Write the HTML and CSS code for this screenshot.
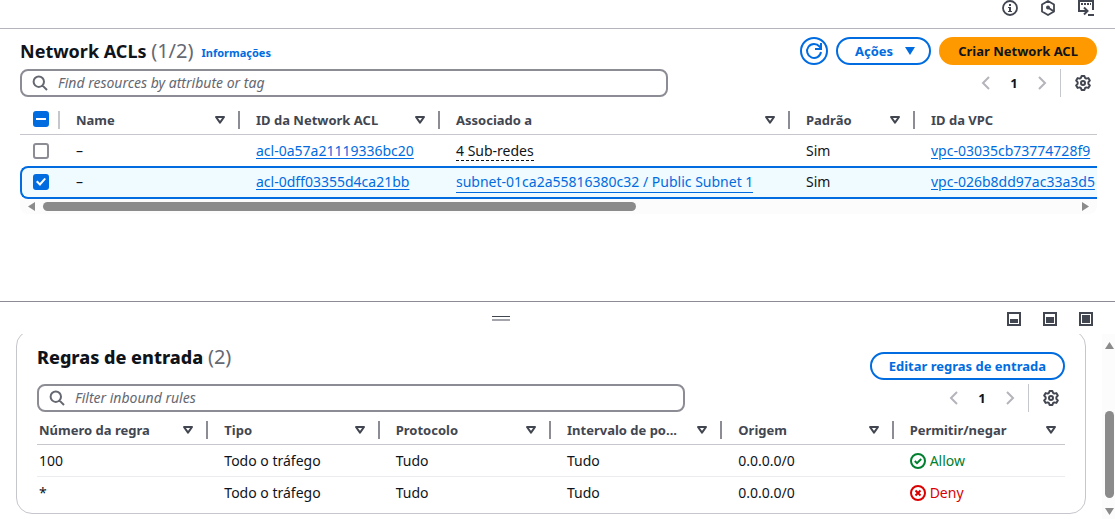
FILE: index.html
```html
<!DOCTYPE html>
<html lang="pt-BR">
<head>
<meta charset="utf-8">
<title>Network ACLs</title>
<link rel="stylesheet" href="styles.css">
</head>
<body>
<svg width="0" height="0" class="sprite" aria-hidden="true">
  <symbol id="search" viewBox="0 0 16 16"><path d="M6.8 1.500a5.200 5.200 0 1 0 0 10.400a5.200 5.200 0 0 0 0-10.400zM10.600 10.600L15 15" fill="none" stroke="currentColor" stroke-width="2"/></symbol>
  <symbol id="sort" viewBox="0 0 12 10"><path d="M2 2h8L6 7.600z" fill="none" stroke="currentColor" stroke-width="2" stroke-linejoin="round"/></symbol>
  <symbol id="left" viewBox="0 0 16 16"><path d="M11 2L5 8l6 6" fill="none" stroke="currentColor" stroke-width="2"/></symbol>
  <symbol id="right" viewBox="0 0 16 16"><path d="M5 2l6 6l-6 6" fill="none" stroke="currentColor" stroke-width="2"/></symbol>
  <symbol id="gear" viewBox="0 0 16 16"><path d="M6.600 1h2.800l.6 1.800l1.300.8l2-.5l1.500 2.500l-1.400 1.500v1.800l1.400 1.500l-1.500 2.500l-2-.5l-1.300.8l-.6 1.800H6.600L6 13.200l-1.300-.8l-2 .5l-1.500-2.500l1.400-1.500V7.100L1.200 5.600l1.500-2.500l2 .5L6 2.800z" fill="none" stroke="currentColor" stroke-width="2" stroke-linejoin="round"/><circle cx="8" cy="8" r="2" fill="none" stroke="currentColor" stroke-width="2"/></symbol>
</svg>

<div class="app">
  <header class="topbar">
    <button class="icon-btn" aria-label="Info"><svg width="16" height="16" viewBox="0 0 16 16"><circle cx="8" cy="8" r="7" fill="none" stroke="currentColor" stroke-width="1.800"/><path d="M7 4h2v2H7zM6 7h3v4h1v1H6v-1h1V8H6z" fill="currentColor"/></svg></button>
    <button class="icon-btn" aria-label="Amazon Q"><svg width="16" height="16" viewBox="0 0 16 16"><path d="M8 1l6 3.500v7L8 15l-6-3.500v-7z" fill="none" stroke="currentColor" stroke-width="1.800" stroke-linejoin="round"/><circle cx="8" cy="7.500" r="2" fill="currentColor"/><path d="M8 7.500l6 4" stroke="currentColor" stroke-width="2"/></svg></button>
    <button class="icon-btn" aria-label="CloudShell"><svg width="16" height="16" viewBox="0 0 16 16"><path d="M4 11H1V1h14v9" fill="none" stroke="currentColor" stroke-width="2"/><path d="M3 4h2M6 4h2M9 4h2M12 4h1" stroke="currentColor" stroke-width="2"/><path d="M4 11h5M6 7.500l3.500 3.500L6 14.500M10 15h6" fill="none" stroke="currentColor" stroke-width="2"/></svg></button>
  </header>

  <main class="main">
    <div class="head">
      <h1 class="title">Network ACLs <span class="count">(1/2)</span></h1>
      <a class="info" href="#">Informações</a>
      <div class="actions">
        <button class="btn round" aria-label="Atualizar"><svg width="18" height="18" viewBox="0 0 18 18"><path d="M16 10A7 7 0 1 1 14.500 4.500L16 6.500M16 1v6h-6" fill="none" stroke="currentColor" stroke-width="2"/></svg></button>
        <button class="btn menu">Ações <svg width="10" height="8" viewBox="0 0 10 8"><path d="M0 0h10L5 8z" fill="currentColor"/></svg></button>
        <button class="btn primary">Criar Network ACL</button>
      </div>
    </div>
    <div class="tools">
      <label class="search"><svg width="16" height="16"><use href="#search"/></svg><input type="search" placeholder="Find resources by attribute or tag" aria-label="Find resources by attribute or tag"></label>
      <div class="pager">
        <button class="icon-btn dim" aria-label="Página anterior"><svg width="16" height="16"><use href="#left"/></svg></button>
        <button class="page">1</button>
        <button class="icon-btn dim" aria-label="Próxima página"><svg width="16" height="16"><use href="#right"/></svg></button>
        <button class="icon-btn prefs" aria-label="Preferências"><svg width="16" height="16"><use href="#gear"/></svg></button>
      </div>
    </div>
    <div class="table-wrap">
      <table class="grid acls">
        <colgroup><col class="c-check"><col class="c-name"><col class="c-id"><col class="c-assoc"><col class="c-def"><col class="c-vpc"></colgroup>
        <thead><tr>
          <th class="check"><input class="box some" type="checkbox" checked aria-label="Selecionar tudo"></th>
          <th><div class="th"><span>Name</span><svg width="12" height="10"><use href="#sort"/></svg></div></th>
          <th><div class="th"><span>ID da Network ACL</span><svg width="12" height="10"><use href="#sort"/></svg></div></th>
          <th><div class="th"><span>Associado a</span><svg width="12" height="10"><use href="#sort"/></svg></div></th>
          <th><div class="th"><span>Padrão</span><svg width="12" height="10"><use href="#sort"/></svg></div></th>
          <th><div class="th"><span>ID da VPC</span></div></th>
        </tr></thead>
        <tbody>
          <tr><td class="check"><input class="box" type="checkbox" aria-label="acl-0a57a21119336bc20"></td><td>–</td><td><a href="#">acl-0a57a21119336bc20</a></td><td><button class="pop">4 Sub-redes</button></td><td>Sim</td><td><a href="#">vpc-03035cb73774728f9</a></td></tr>
          <tr class="selected"><td class="check"><input class="box tick" type="checkbox" checked aria-label="acl-0dff03355d4ca21bb"></td><td>–</td><td><a href="#">acl-0dff03355d4ca21bb</a></td><td><a class="under" href="#">subnet-01ca2a55816380c32 / Public Subnet 1</a></td><td>Sim</td><td><a href="#">vpc-026b8dd97ac33a3d5</a></td></tr>
        </tbody>
      </table>
    </div>
    <div class="hscroll"><i class="arrow al"></i><div class="track"><div class="thumb"></div></div><i class="arrow ar"></i></div>
  </main>

  <section class="panel">
    <div class="panel-bar">
      <button class="handle" aria-label="Redimensionar"></button>
      <div class="sizes">
        <button class="icon-btn" aria-label="Pequeno"><svg width="14" height="14" viewBox="0 0 14 14"><path d="M1 1h12v12H1z" fill="none" stroke="currentColor" stroke-width="2"/><path d="M3 7h8v4H3z" fill="currentColor"/></svg></button>
        <button class="icon-btn" aria-label="Médio"><svg width="14" height="14" viewBox="0 0 14 14"><path d="M1 1h12v12H1z" fill="none" stroke="currentColor" stroke-width="2"/><path d="M3 5h8v6H3z" fill="currentColor"/></svg></button>
        <button class="icon-btn" aria-label="Grande"><svg width="14" height="14" viewBox="0 0 14 14"><path d="M1 1h12v12H1z" fill="none" stroke="currentColor" stroke-width="2"/><path d="M3 3h8v8H3z" fill="currentColor"/></svg></button>
      </div>
    </div>
    <div class="panel-body">
      <div class="card">
        <div class="head">
          <h2 class="title">Regras de entrada <span class="count">(2)</span></h2>
          <div class="actions"><button class="btn edit">Editar regras de entrada</button></div>
        </div>
        <div class="tools">
          <label class="search"><svg width="16" height="16"><use href="#search"/></svg><input type="search" placeholder="Filter inbound rules" aria-label="Filter inbound rules"></label>
          <div class="pager">
            <button class="icon-btn dim" aria-label="Página anterior"><svg width="16" height="16"><use href="#left"/></svg></button>
            <button class="page">1</button>
            <button class="icon-btn dim" aria-label="Próxima página"><svg width="16" height="16"><use href="#right"/></svg></button>
            <button class="icon-btn prefs" aria-label="Preferências"><svg width="16" height="16"><use href="#gear"/></svg></button>
          </div>
        </div>
        <table class="grid rules">
          <thead><tr>
            <th><div class="th"><span>Número da regra</span><svg width="12" height="10"><use href="#sort"/></svg></div></th>
            <th><div class="th"><span>Tipo</span><svg width="12" height="10"><use href="#sort"/></svg></div></th>
            <th><div class="th"><span>Protocolo</span><svg width="12" height="10"><use href="#sort"/></svg></div></th>
            <th><div class="th"><span>Intervalo de po...</span><svg width="12" height="10"><use href="#sort"/></svg></div></th>
            <th><div class="th"><span>Origem</span><svg width="12" height="10"><use href="#sort"/></svg></div></th>
            <th><div class="th"><span>Permitir/negar</span><svg width="12" height="10"><use href="#sort"/></svg></div></th>
          </tr></thead>
          <tbody>
            <tr><td>100</td><td>Todo o tráfego</td><td>Tudo</td><td>Tudo</td><td>0.0.0.0/0</td><td><span class="status ok"><svg width="16" height="16" viewBox="0 0 16 16"><circle cx="8" cy="8" r="7" fill="none" stroke="currentColor" stroke-width="2"/><path d="M4.800 8l2.200 2.200L11.200 6" fill="none" stroke="currentColor" stroke-width="2"/></svg>Allow</span></td></tr>
            <tr><td>*</td><td>Todo o tráfego</td><td>Tudo</td><td>Tudo</td><td>0.0.0.0/0</td><td><span class="status bad"><svg width="16" height="16" viewBox="0 0 16 16"><circle cx="8" cy="8" r="7" fill="none" stroke="currentColor" stroke-width="2"/><path d="M5.500 5.500l5 5M10.500 5.500l-5 5" fill="none" stroke="currentColor" stroke-width="2"/></svg>Deny</span></td></tr>
          </tbody>
        </table>
      </div>
      <div class="vscroll"><i class="arrow au"></i><div class="vtrack"><div class="vthumb"></div></div><i class="arrow ad"></i></div>
    </div>
  </section>
</div>
</body>
</html>
```
FILE: styles.css
```css
* { box-sizing: border-box; }
body {
  margin: 0;
  background: #fff;
  color: #0f141a;
  font: 13px/20px "Noto Sans", "Open Sans", sans-serif;
}
.sprite { position: absolute; }
svg { display: block; flex: none; }
button, input { font: inherit; color: inherit; }
button { padding: 0; border: 0; background: none; cursor: pointer; }
a { color: #006ce0; text-underline-offset: 2px; }
.app { display: flex; flex-direction: column; height: 100vh; overflow: hidden; }

.topbar {
  display: flex;
  justify-content: flex-end;
  align-items: flex-start;
  gap: 22px;
  height: 29px;
  padding-right: 21px;
  border-bottom: 1px solid #b4b4bb;
  color: #424650;
}
.icon-btn { display: flex; color: #424650; }
.dim { color: #b4b4bb; }

.main { flex: 1; min-height: 0; padding: 8px 18px 0 20px; }
.head { display: flex; align-items: center; height: 28px; }
.title { margin: 0; font-size: 18px; line-height: 24px; font-weight: 700; }
.count { color: #656871; font-size: 20px; font-weight: 400; }
.info { margin: 4px 0 0 8px; font-size: 11px; line-height: 16px; font-weight: 700; text-decoration: none; }
.actions { display: flex; gap: 8px; margin-left: auto; }
.btn {
  display: flex;
  align-items: center;
  justify-content: center;
  height: 28px;
  padding: 0 17px;
  border: 2px solid #006ce0;
  border-radius: 14px;
  color: #006ce0;
  font-weight: 700;
}
.round { width: 28px; padding: 0; }
.menu { gap: 12px; padding: 0 14px 0 17px; }
.primary { border-color: #ff9900; background: #ff9900; color: #0f141a; }

.tools { display: flex; justify-content: space-between; gap: 16px; margin-top: 4px; }
.search {
  display: flex;
  align-items: center;
  gap: 10px;
  flex: 0 1 648px;
  height: 28px;
  padding: 0 10px;
  border: 2px solid #8c8c94;
  border-radius: 8px;
  color: #656871;
  font-size: 14px;
}
.search input { flex: 1; min-width: 0; border: 0; outline: 0; padding: 0; background: none; }
.search input::placeholder { color: #656871; font-style: italic; opacity: 1; }
.pager { display: flex; align-items: center; }
.page { width: 40px; font-weight: 700; }
.prefs { align-items: center; height: 28px; margin-left: 10px; padding: 0 6px 0 14px; border-left: 1px solid #c6c6cd; }

.grid { table-layout: fixed; border-collapse: separate; border-spacing: 0; }
.grid th { height: 30px; padding: 0; border-bottom: 1px solid #c6c6cd; color: #424650; font-weight: 700; text-align: left; }
.grid td { height: 31px; padding: 0 0 0 16px; font-size: 14px; white-space: nowrap; }
.th {
  display: flex;
  align-items: center;
  justify-content: space-between;
  height: 18px;
  padding: 0 12px 0 16px;
  border-right: 2px solid #8c8c94;
  white-space: nowrap;
}
th:last-child .th { border-right-color: transparent; padding-right: 6px; }
.table-wrap { margin-top: 8px; overflow: hidden; }
.acls { width: 1120px; }
.c-check { width: 40px; }
.c-name { width: 180px; }
.c-id { width: 200px; }
.c-assoc { width: 350px; }
.c-def { width: 125px; }
.grid .check { padding: 0 0 0 13px; }
.grid th.check { padding-bottom: 2px; background: linear-gradient(#c6c6cd, #c6c6cd) right 6px / 2px 18px no-repeat; }
.box {
  appearance: none;
  display: flex;
  align-items: center;
  justify-content: center;
  width: 16px;
  height: 16px;
  margin: 0;
  border: 2px solid #8c8c94;
  border-radius: 3px;
}
.box:checked { border-color: #006ce0; background: #006ce0; }
.some::before { content: ""; width: 10px; height: 2px; background: #fff; }
.tick::before {
  content: "";
  width: 10px;
  height: 8px;
  background: #fff;
  clip-path: polygon(0 50%, 15% 32%, 38% 62%, 84% 0, 100% 14%, 40% 100%);
}
.pop { height: 20px; line-height: 20px; border-bottom: 1px dashed #0f141a; }
.under { display: inline-block; line-height: 20px; border-bottom: 1px solid #006ce0; text-decoration: none; }
.grid .selected td { height: 33px; padding-bottom: 1px; border: solid #006ce0; border-width: 2px 0; background: #f0fbff; }
.grid .selected .check { padding-left: 11px; border-left-width: 2px; border-radius: 8px 0 0 8px; }

.arrow { background: #8b8b8b; }
.al, .ar { width: 7px; height: 9px; }
.au, .ad { width: 9px; height: 7px; }
.al { clip-path: polygon(100% 0, 0 50%, 100% 100%); }
.ar { clip-path: polygon(0 0, 100% 50%, 0 100%); }
.au { clip-path: polygon(0 100%, 50% 0, 100% 100%); }
.ad { clip-path: polygon(0 0, 100% 0, 50% 100%); }
.hscroll {
  display: flex;
  align-items: center;
  gap: 8px;
  height: 15px;
  padding: 0 8px;
  border-radius: 0 0 8px 8px;
  background: #fcfcfc;
}
.track { flex: 1; padding-right: 8px; }
.thumb { width: 58%; height: 9px; border-radius: 5px; background: #8b8b8b; }

.panel { display: flex; flex-direction: column; height: 218px; border-top: 1px solid #8c8c94; }
.panel-bar { display: flex; align-items: center; gap: 6px; height: 32px; padding-right: 22px; }
.handle { width: 18px; height: 5px; margin: 0 auto; border: solid #424650; border-width: 1px 0 2px; border-bottom-color: #a4a4ad; }
.sizes { display: flex; gap: 22px; padding-top: 2px; }
.panel-body { display: flex; flex: 1; min-height: 0; overflow: hidden; }
.card {
  flex: 1;
  align-self: flex-start;
  min-width: 0;
  margin: -4px 16px 0 16px;
  padding: 14px 20px 5px;
  border: 1px solid #c6c6cd;
  border-radius: 16px;
}
.card .head { align-items: flex-start; height: 39px; }
.card .title { font-weight: 800; }
.card .actions { padding-top: 7px; }
.card .tools { margin-top: 0; }
.rules { width: 100%; margin-top: 3px; }
.rules td:first-child { padding-left: 2px; }
.rules th:first-child .th { padding-left: 2px; }
.rules tbody tr:first-child td { height: 32px; border-bottom: 1px solid #ebebf0; }
.status { display: flex; align-items: center; gap: 4px; }
.ok { color: #00802f; }
.bad { color: #db0000; }
.vscroll { display: flex; flex-direction: column; align-items: center; gap: 4px; width: 13px; padding: 8px 1px 4px 3px; background: #fcfcfc; }
.vtrack { display: flex; flex-direction: column; justify-content: flex-end; flex: 1; padding-bottom: 6px; }
.vthumb { width: 9px; height: 60%; border-radius: 5px; background: #8b8b8b; }
```
